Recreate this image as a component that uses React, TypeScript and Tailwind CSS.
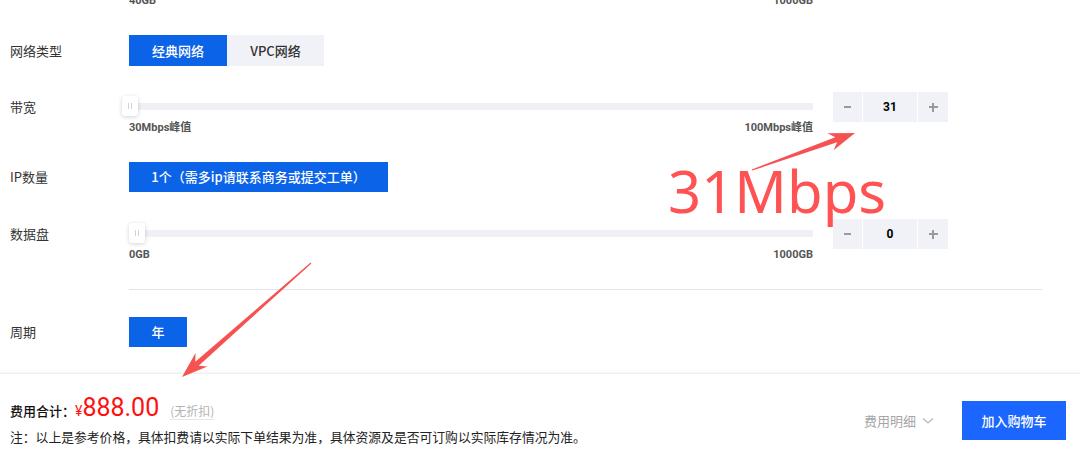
import React from 'react';

type Pt = [number, number];

function arrowPoints(tail: Pt, tip: Pt) {
  const dx = tip[0] - tail[0];
  const dy = tip[1] - tail[1];
  const len = Math.hypot(dx, dy);
  const ux = dx / len;
  const uy = dy / len;
  const nx = -uy;
  const ny = ux;
  const headLen = 26;
  const headHalf = 9;
  const neck = 20;
  const at = (d: number, w: number): string =>
    `${(tip[0] - ux * d + nx * w).toFixed(1)},${(tip[1] - uy * d + ny * w).toFixed(1)}`;
  return [
    at(len, 0.6),
    at(neck, 2.6),
    at(headLen, headHalf),
    `${tip[0]},${tip[1]}`,
    at(headLen, -headHalf),
    at(neck, -2.6),
    at(len, -0.6),
  ].join(' ');
}

function Thumb({ offset }: { offset: string }) {
  return (
    <div
      className={`absolute top-[-7px] ${offset} w-[16px] h-[20px] rounded-[3px] bg-white shadow-[0_1px_4px_rgba(0,0,0,0.18)] flex items-center justify-center gap-[2px]`}
    >
      <span className="w-px h-[6px] bg-[#cfd2d8]" />
      <span className="w-px h-[6px] bg-[#cfd2d8]" />
    </div>
  );
}

function Stepper({ value }: { value: string }) {
  return (
    <div className="ml-[20px] flex h-[30px] gap-px bg-white">
      <div className="w-[29px] bg-[#f0f2f7] flex items-center justify-center">
        <span className="w-[7px] h-[2px] bg-[#9a9a9a]" />
      </div>
      <div className="w-[54px] bg-[#f0f2f7] flex items-center justify-center text-[12px] font-bold text-black font-['Roboto',sans-serif]">
        {value}
      </div>
      <div className="w-[30px] bg-[#f0f2f7] flex items-center justify-center relative">
        <span className="absolute w-[9px] h-[2px] bg-[#9a9a9a]" />
        <span className="absolute w-[2px] h-[9px] bg-[#9a9a9a]" />
      </div>
    </div>
  );
}

function SliderRow({
  label,
  min,
  max,
  value,
  thumb,
  className,
}: {
  label: string;
  min: string;
  max: string;
  value: string;
  thumb: string;
  className: string;
}) {
  return (
    <div className={`flex items-start ${className}`}>
      <div className="w-[119px] h-[30px] flex items-center text-[13px] text-[#333]">{label}</div>
      <div className="w-[684px] pt-[11px]">
        <div className="relative h-[7px] bg-[#eef0f5]">
          <Thumb offset={thumb} />
        </div>
        <div className="mt-[11px] flex justify-between text-[11px] leading-[14px] font-bold text-[#555] font-['Roboto','Noto_Sans_CJK_SC',sans-serif]">
          <span>{min}</span>
          <span>{max}</span>
        </div>
      </div>
      <Stepper value={value} />
    </div>
  );
}

export default function App() {
  return (
    <div className="relative w-[1080px] h-[454px] overflow-hidden bg-white font-['Noto_Sans_CJK_SC',sans-serif]">
      <div className="pl-[10px]">
        <div className="mt-[-5px] ml-[119px] w-[684px] h-[12px] flex justify-between text-[11px] leading-[12px] font-bold text-[#555] font-['Roboto',sans-serif]">
          <span>40GB</span>
          <span>1000GB</span>
        </div>

        <div className="mt-[28px] flex items-center h-[31px]">
          <div className="w-[119px] text-[13px] text-[#333]">网络类型</div>
          <div className="w-[98px] h-[31px] bg-[#0b63e8] text-white text-[13px] font-medium flex items-center justify-center">
            经典网络
          </div>
          <div className="w-[97px] h-[31px] bg-[#f0f2f7] text-[#333] text-[13px] font-medium flex items-center justify-center">
            VPC网络
          </div>
        </div>

        <SliderRow
          className="mt-[26px]"
          label="带宽"
          min="30Mbps峰值"
          max="100Mbps峰值"
          value="31"
          thumb="left-[-7px]"
        />

        <div className="mt-[27px] flex items-center h-[30px]">
          <div className="w-[119px] text-[13px] text-[#333]">IP数量</div>
          <div className="w-[259px] h-[30px] bg-[#0b63e8] text-white text-[13px] font-medium flex items-center justify-center">
            1个（需多ip请联系商务或提交工单）
          </div>
        </div>

        <SliderRow
          className="mt-[27px]"
          label="数据盘"
          min="0GB"
          max="1000GB"
          value="0"
          thumb="left-0"
        />

        <div className="mt-[27px] ml-[119px] w-[913px] h-px bg-[#e3e4e9]" />

        <div className="mt-[27px] flex items-center h-[30px]">
          <div className="w-[119px] text-[13px] text-[#333]">周期</div>
          <div className="w-[58px] h-[30px] bg-[#0b63e8] text-white text-[13px] font-medium flex items-center justify-center">
            年
          </div>
        </div>
      </div>

      <div className="mt-[26px] h-[81px] border-t border-[#eeeeee] shadow-[0_-2px_4px_rgba(0,0,0,0.03)] flex justify-between">
        <div className="pl-[10px] pt-[20px]">
          <div className="flex items-baseline h-[28px]">
            <span className="text-[13px] font-medium text-[#111]">费用合计：</span>
            <span className="text-[14px] text-[#ff1a1a] font-['Roboto',sans-serif]">¥</span>
            <span className="text-[25px] leading-[28px] text-[#ff0f0f] font-['Roboto',sans-serif]">888.00</span>
            <span className="ml-[11px] text-[12px] text-[#b3b3b3] border-b border-[#e6e6e6] leading-[16px]">(无折扣)</span>
          </div>
          <div className="mt-[6px] text-[12.8px] leading-[18px] text-[#222]">
            注：以上是参考价格，具体扣费请以实际下单结果为准，具体资源及是否可订购以实际库存情况为准。
          </div>
        </div>
        <div className="pt-[27px] pr-[14px] flex items-start">
          <div className="h-[39px] flex items-center text-[13px] text-[#a6a6a6]">
            费用明细
            <svg className="ml-[6px]" width="12" height="8" viewBox="0 0 12 8" fill="none">
              <path d="M1 1.5 L6 6 L11 1.5" stroke="#b5b5b5" strokeWidth="1.1" />
            </svg>
          </div>
          <div className="ml-[28px] w-[104px] h-[39px] bg-[#1b66ff] text-white text-[13px] font-medium flex items-center justify-center">
            加入购物车
          </div>
        </div>
      </div>

      <div className="absolute left-[668px] top-[162px] text-[58px] leading-none text-[#ff5252] font-['Noto_Sans',sans-serif]">
        31Mbps
      </div>
      <svg className="absolute inset-0 pointer-events-none" width="1080" height="454">
        <polygon points={arrowPoints([752, 170], [855, 133])} fill="#f75252" />
        <polygon points={arrowPoints([311, 263], [182, 377])} fill="#f75252" />
      </svg>
    </div>
  );
}
